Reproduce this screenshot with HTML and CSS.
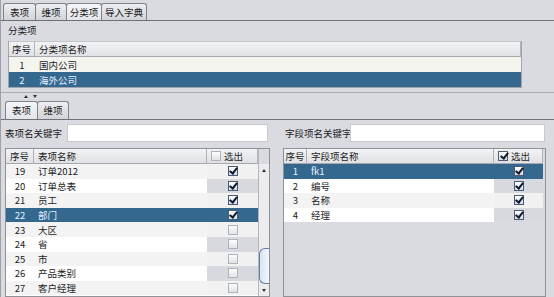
FILE: index.html
```html
<!DOCTYPE html>
<html lang="zh">
<head>
    <meta charset="UTF-8">
    <title>分类项</title>
    <link rel="stylesheet" href="styles.css">
</head>
<body>
    <div class="window">
        <div class="tabbar top">
            <span class="tab w32">表项</span>
            <span class="tab w31">维项</span>
            <span class="tab w35 active">分类项</span>
            <span class="tab w45">导入字典</span>
        </div>

        <div class="top-pane">
            <div class="pane-title">分类项</div>
            <div class="cat-grid">
                <div class="row head"><div class="c num">序号</div><div class="c name">分类项名称</div></div>
                <div class="row cream"><div class="c num">1</div><div class="c name">国内公司</div></div>
                <div class="row sel"><div class="c num">2</div><div class="c name">海外公司</div></div>
            </div>
        </div>

        <!-- splitter with the little one-touch arrows -->
        <div class="splitter"><span class="tri up"></span><span class="tri down"></span></div>

        <div class="tabbar bottom">
            <span class="tab w32 active">表项</span>
            <span class="tab w31">维项</span>
        </div>

        <div class="bottom-pane">
            <div class="search-row">
                <div class="search left"><label>表项名关键字</label><span class="input"></span></div>
                <div class="search right"><label>字段项名关键字</label><span class="input"></span></div>
            </div>

            <div class="tables">
                <div class="table left">
                    <div class="tbody">
                        <div class="row head"><div class="c num">序号</div><div class="c name">表项名称</div><div class="c ck head-ck"><span class="cb"></span>选出</div></div>
                        <div class="row alt"><div class="c num">19</div><div class="c name">订单2012</div><div class="c ck"><span class="cb on"></span></div></div>
                        <div class="row"><div class="c num">20</div><div class="c name">订单总表</div><div class="c ck"><span class="cb on"></span></div></div>
                        <div class="row alt"><div class="c num">21</div><div class="c name">员工</div><div class="c ck"><span class="cb on"></span></div></div>
                        <div class="row sel"><div class="c num">22</div><div class="c name">部门</div><div class="c ck"><span class="cb on"></span></div></div>
                        <div class="row alt"><div class="c num">23</div><div class="c name">大区</div><div class="c ck"><span class="cb"></span></div></div>
                        <div class="row"><div class="c num">24</div><div class="c name">省</div><div class="c ck"><span class="cb"></span></div></div>
                        <div class="row alt"><div class="c num">25</div><div class="c name">市</div><div class="c ck"><span class="cb"></span></div></div>
                        <div class="row"><div class="c num">26</div><div class="c name">产品类别</div><div class="c ck"><span class="cb"></span></div></div>
                        <div class="row alt"><div class="c num">27</div><div class="c name">客户经理</div><div class="c ck"><span class="cb"></span></div></div>
                    </div>
                    <div class="sbar">
                        <div class="sb-corner"></div>
                        <div class="sb-track">
                            <div class="sb-btn"><span class="tri up"></span></div>
                            <div class="sb-gap"></div>
                            <div class="sb-thumb"></div>
                            <div class="sb-fill"></div>
                            <div class="sb-btn"><span class="tri down"></span></div>
                        </div>
                    </div>
                </div>

                <div class="table right">
                    <div class="row head"><div class="c num">序号</div><div class="c name">字段项名称</div><div class="c ck head-ck"><span class="cb on"></span>选出</div></div>
                    <div class="row sel"><div class="c num">1</div><div class="c name">fk1</div><div class="c ck"><span class="cb on"></span></div></div>
                    <div class="row"><div class="c num">2</div><div class="c name">编号</div><div class="c ck"><span class="cb on"></span></div></div>
                    <div class="row alt"><div class="c num">3</div><div class="c name">名称</div><div class="c ck"><span class="cb on"></span></div></div>
                    <div class="row"><div class="c num">4</div><div class="c name">经理</div><div class="c ck"><span class="cb on"></span></div></div>
                </div>
            </div>
        </div>
    </div>
</body>
</html>
```

FILE: styles.css
```css
body {
    margin: 0;
    background: #d9dbe1;
    font-family: "Noto Sans CJK SC", "Noto Sans", sans-serif;
    font-size: 9.5px;
    color: #1c1c1c;
    overflow: hidden;
}

.window {
    width: 554px;
    height: 297px;
    border-left: 1px solid #9ea0a6;
    box-sizing: border-box;
    display: flex;
    flex-direction: column;
}

/* tabs */
.tabbar {
    display: flex;
    align-items: flex-end;
    border-bottom: 1px solid #6f7177;
    flex-shrink: 0;
}

.tabbar.top {
    height: 20px;
    padding-left: 2px;
}

.tabbar.bottom {
    height: 19px;
    padding-left: 4px;
}

.tab {
    height: 17px;
    line-height: 16px;
    border: 1px solid #808288;
    border-bottom: none;
    border-radius: 3px 3px 0 0;
    background: linear-gradient(#eceef1, #d2d4d9);
    text-align: center;
    box-sizing: border-box;
    margin-right: -1px;
}

.tab.active {
    background: linear-gradient(#f4f5f8, #e4e6ea);
}

.bottom .tab {
    height: 18px;
    line-height: 17px;
}

.w31 { width: 32px; }
.w32 { width: 33px; }
.w35 { width: 36px; }
.w45 { width: 46px; }

/* top pane */
.top-pane {
    height: 72px;
    padding: 3px 0 0 7px;
    box-sizing: border-box;
    border-bottom: 1px solid #a9abb1;
    flex-shrink: 0;
}

.pane-title {
    height: 12px;
    line-height: 12px;
}

.cat-grid {
    margin-top: 5px;
    width: 512px;
    border: 1px solid #a2a4aa;
    border-top: none;
    background: #fff;
}

.cat-grid .row {
    display: grid;
    grid-template-columns: 26px 1fr;
    height: 15px;
}

.cat-grid .row.head {
    height: 16px;
}

.row.cream { background: #f5f5f0; }

/* generic cells */
.c {
    display: flex;
    align-items: center;
    overflow: hidden;
    white-space: nowrap;
}

.c.num {
    justify-content: center;
}

.c.name {
    padding-left: 4px;
}

.row.head .c {
    background: linear-gradient(#f2f3f5, #dfe1e5);
    border-right: 1px solid #b1b3b9;
    border-bottom: 1px solid #a6a8ae;
    border-top: 1px solid #c4c6cc;
    box-sizing: border-box;
}

.row.sel {
    background: #34688f;
    color: #e4f1ff;
}

/* splitter */
.splitter {
    height: 7px;
    display: flex;
    align-items: center;
    gap: 5px;
    padding-left: 23px;
    flex-shrink: 0;
}

.tri {
    width: 0;
    height: 0;
    border-left: 2.5px solid transparent;
    border-right: 2.5px solid transparent;
}

.tri.up { border-bottom: 3px solid #2c3340; }
.tri.down { border-top: 3px solid #2c3340; }

/* bottom pane */
.bottom-pane {
    flex: 1;
    min-height: 0;
    padding: 4px 8px 0 4px;
    display: flex;
    flex-direction: column;
}

.search-row {
    display: flex;
    gap: 13px;
    height: 18px;
}

.search {
    display: flex;
    align-items: center;
}

.search.left { width: 265px; }
.search.right { width: 263px; }

.search label {
    width: 62px;
    flex-shrink: 0;
    white-space: nowrap;
}

.search.right label {
    width: 65px;
    padding-left: 2px;
}

.input {
    flex: 1;
    height: 18px;
    background: #fff;
    border: 1px solid #c8cad0;
    box-sizing: border-box;
    margin-right: 2px;
}

.search.right .input {
    margin-right: 1px;
}

.tables {
    flex: 1;
    min-height: 0;
    display: flex;
    gap: 13px;
    margin-top: 6px;
}

.table {
    border: 1px solid #8f9197;
    overflow: hidden;
    background: #d9dbe1;
}

.table.left {
    width: 265px;
    display: flex;
    box-sizing: border-box;
}

.table.right {
    width: 263px;
    box-sizing: border-box;
}

.tbody {
    width: 252px;
    background: #fff;
}

.table .row {
    display: grid;
    height: 14.6px;
    background: #fff;
}

.table .row.head {
    height: 15px;
}

.table .row.head .c {
    border-top: none;
}

.table.left .row { grid-template-columns: 28px 173px 51px; }
.table.right .row { grid-template-columns: 23px 187px 49px; width: 259px; }

.table .row.alt { background: #f3f3f4; }
.table .row.sel { background: #34688f; }

.c.ck {
    justify-content: center;
    background: #d7d9df;
}

.row.alt .c.ck { background: #f1f1f2; }
.row.sel .c.ck { background: #34688f; }

.c.head-ck {
    justify-content: flex-start;
    padding-left: 4px;
    gap: 3px;
}

/* check boxes */
.cb {
    display: inline-block;
    position: relative;
    width: 10px;
    height: 10px;
    box-sizing: border-box;
    border: 1px solid #aeb2ba;
    background: linear-gradient(#fdfdfd, #e0e3e8);
}

.cb.on {
    border-color: #4b5b70;
    background: linear-gradient(#ffffff, #d5dae2);
}

.cb.on::after {
    content: "";
    position: absolute;
    left: 2.5px;
    top: -1px;
    width: 2.5px;
    height: 6px;
    border: solid #0f1a30;
    border-width: 0 2px 2px 0;
    transform: rotate(38deg);
}

/* scrollbar */
.sbar {
    width: 11px;
    display: flex;
    flex-direction: column;
    border-left: 1px solid #b4b6bc;
    box-sizing: border-box;
}

.sb-corner {
    height: 15px;
    background: #d9dbe1;
    flex-shrink: 0;
}

.sb-track {
    flex: 1;
    display: flex;
    flex-direction: column;
    background: #ececee;
}

.sb-btn {
    height: 12px;
    display: flex;
    justify-content: center;
    align-items: center;
    flex-shrink: 0;
}

.sb-gap {
    height: 72px;
    flex-shrink: 0;
}

.sb-thumb {
    height: 36px;
    border: 1px solid #5f7fa5;
    border-right: none;
    border-radius: 6px 0 0 6px;
    background: linear-gradient(90deg, #d6e4f3, #f3f7fb);
    box-sizing: border-box;
    flex-shrink: 0;
}

.sb-fill {
    flex: 1;
}
```
